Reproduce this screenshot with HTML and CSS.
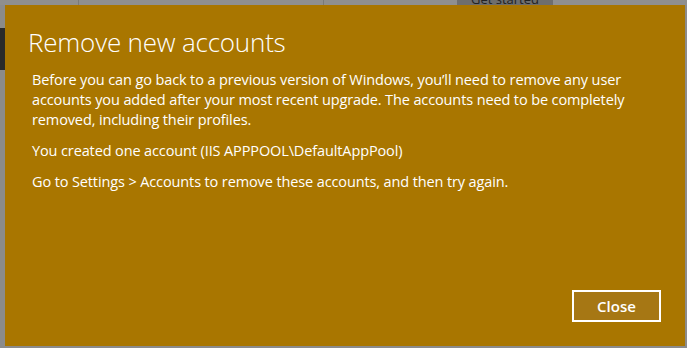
FILE: index.html
```html
<!DOCTYPE html>
<html lang="en">
<head>
  <meta charset="UTF-8">
  <title>Remove new accounts</title>
  <link rel="stylesheet" href="styles.css">
</head>
<body>
  <div class="backdrop">
    <div class="top-strip">
      <span class="divider d1"></span>
      <span class="divider d2"></span>
      <span class="get-started">Get started</span>
    </div>
    <div class="left-dark"></div>
  </div>

  <!-- dialog over the dimmed page -->
  <div class="dialog">
    <h1>Remove new accounts</h1>
    <div class="body">
      <p>Before you can go back to a previous version of Windows, you’ll need to remove any user accounts you added after your most recent upgrade. The accounts need to be completely removed, including their profiles.</p>
      <p>You created one account (IIS APPPOOL\DefaultAppPool)</p>
      <p>Go to Settings &gt; Accounts to remove these accounts, and then try again.</p>
    </div>
    <div class="actions">
      <button class="close-btn">Close</button>
    </div>
  </div>
</body>
</html>
```
FILE: styles.css
```css
body {
  margin: 0;
  width: 687px;
  height: 348px;
  overflow: hidden;
  background: #8b8b8b;
  font-family: 'Open Sans', 'Noto Sans', sans-serif;
  position: relative;
}

.backdrop {
  height: 100%;
}

.top-strip {
  height: 5px;
  position: relative;
  background: #8f8f8f;
}

.divider {
  position: absolute;
  top: 0;
  width: 1px;
  height: 5px;
  background: #7a7a7a;
}

.d1 { left: 78px; }
.d2 { left: 323px; }

.get-started {
  position: absolute;
  left: 457px;
  top: -7px;
  width: 96px;
  height: 12px;
  background: #6e6e6e;
  color: #222;
  font-size: 13px;
  line-height: 13px;
  text-align: center;
}

.left-dark {
  margin-top: 23px;
  width: 5px;
  height: 42px;
  background: #2a2a2a;
}

.dialog {
  position: absolute;
  left: 5px;
  top: 5px;
  width: 680px;
  height: 341px;
  background: #a97600;
  color: #fff;
  display: flex;
  flex-direction: column;
  box-sizing: border-box;
  padding: 0 22px 24px 23px;
}

h1 {
  margin: 20px 0 0;
  font-weight: 300;
  font-size: 26px;
  line-height: 34px;
  letter-spacing: -0.2px;
}

.body {
  margin-top: 11px;
  padding-left: 4px;
  max-width: 612px;
  font-size: 14.5px;
  line-height: 20px;
  letter-spacing: -0.12px;
  flex: 1;
}

.body p {
  margin: 0 0 11px;
}

.actions {
  display: flex;
  justify-content: flex-end;
  padding-right: 2px;
}

.close-btn {
  width: 89px;
  height: 32px;
  background: #a67714;
  border: 2px solid #fff;
  color: #fff;
  font-family: inherit;
  font-size: 15px;
  font-weight: 600;
  padding: 0;
}
```
